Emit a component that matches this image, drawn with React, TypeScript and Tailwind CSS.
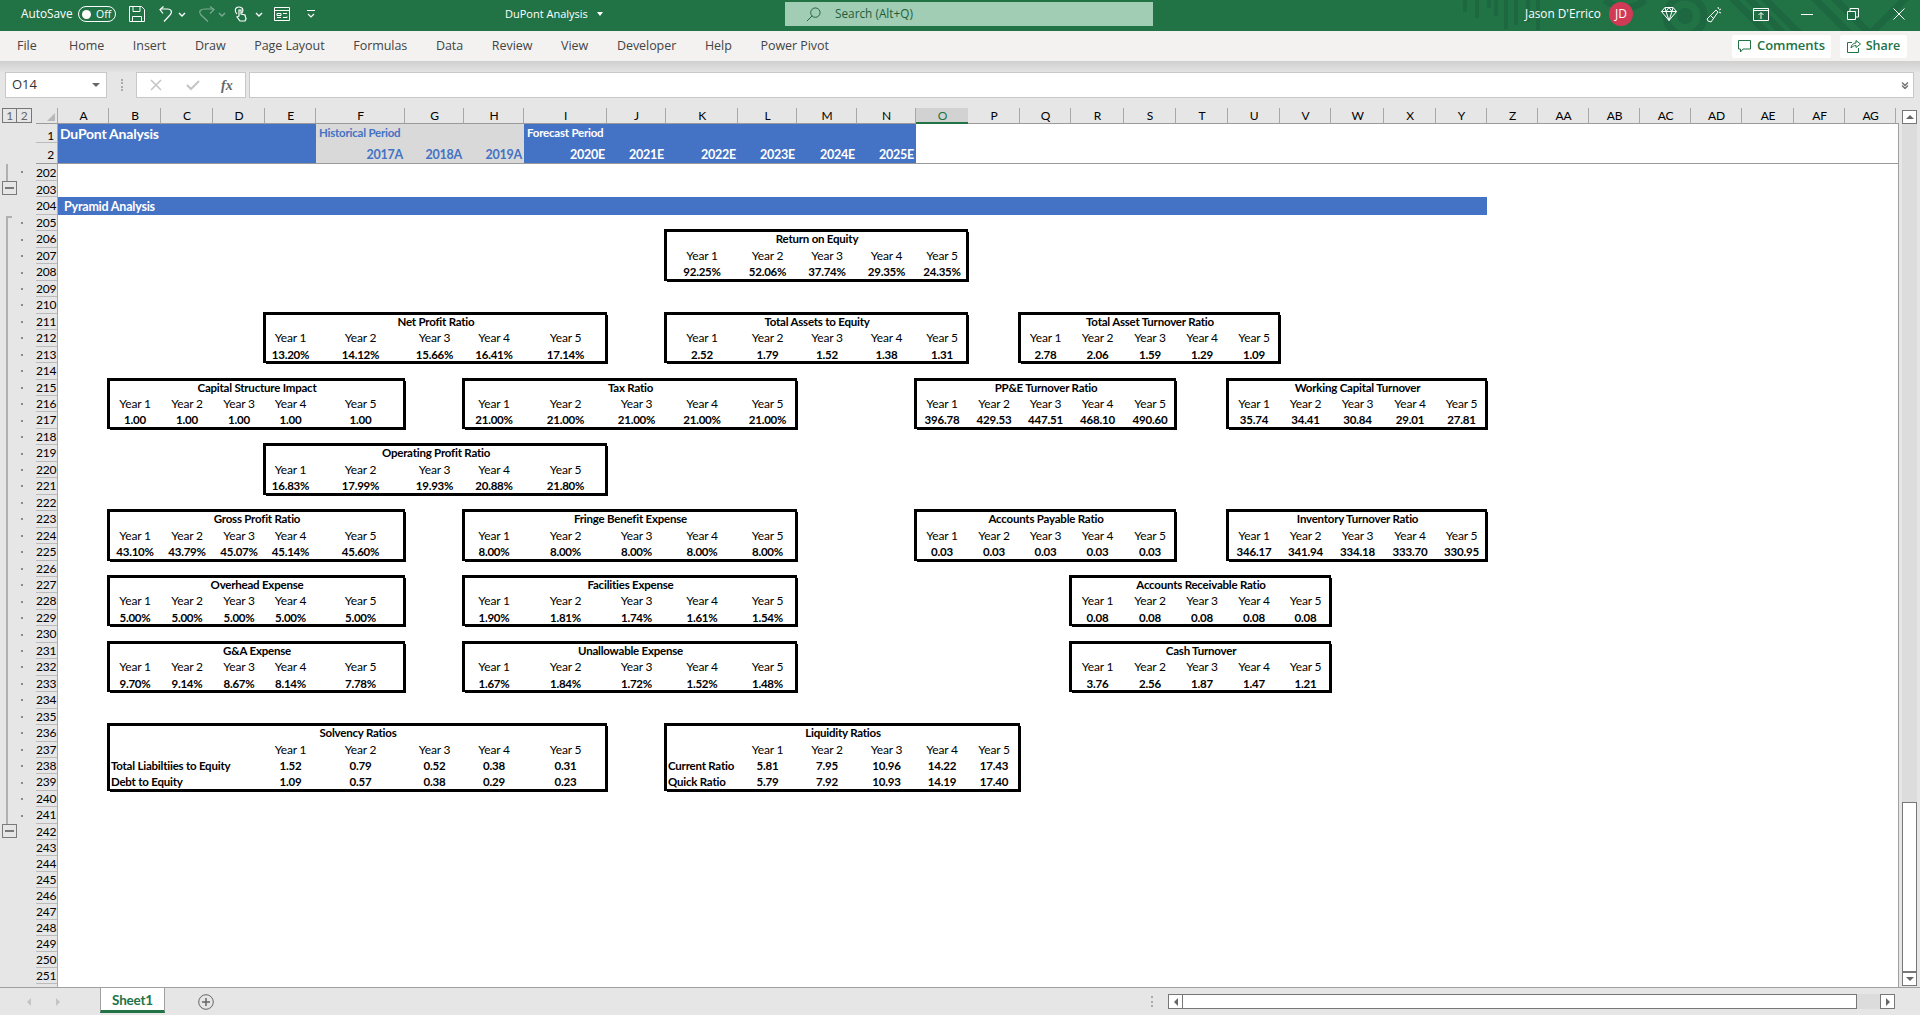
import React from "react";

const LETTERS = ["A","B","C","D","E","F","G","H","I","J","K","L","M","N","O","P","Q","R","S","T","U","V","W","X","Y","Z","AA","AB","AC","AD","AE","AF","AG"];
const TABS = ["Home","Insert","Draw","Page Layout","Formulas","Data","Review","View","Developer","Help","Power Pivot"];
const YEARS = ["Year 1","Year 2","Year 3","Year 4","Year 5"];

type Box = { title: string; place: string; values: string[] };

const BOXES: Box[] = [
  { title: "Return on Equity", place: "col-[13/18] row-[8/11]", values: ["92.25%","52.06%","37.74%","29.35%","24.35%"] },
  { title: "Net Profit Ratio", place: "col-[7/12] row-[13/16]", values: ["13.20%","14.12%","15.66%","16.41%","17.14%"] },
  { title: "Total Assets to Equity", place: "col-[13/18] row-[13/16]", values: ["2.52","1.79","1.52","1.38","1.31"] },
  { title: "Total Asset Turnover Ratio", place: "col-[19/24] row-[13/16]", values: ["2.78","2.06","1.59","1.29","1.09"] },
  { title: "Capital Structure Impact", place: "col-[4/9] row-[17/20]", values: ["1.00","1.00","1.00","1.00","1.00"] },
  { title: "Tax Ratio", place: "col-[10/15] row-[17/20]", values: ["21.00%","21.00%","21.00%","21.00%","21.00%"] },
  { title: "PP&E Turnover Ratio", place: "col-[17/22] row-[17/20]", values: ["396.78","429.53","447.51","468.10","490.60"] },
  { title: "Working Capital Turnover", place: "col-[23/28] row-[17/20]", values: ["35.74","34.41","30.84","29.01","27.81"] },
  { title: "Operating Profit Ratio", place: "col-[7/12] row-[21/24]", values: ["16.83%","17.99%","19.93%","20.88%","21.80%"] },
  { title: "Gross Profit Ratio", place: "col-[4/9] row-[25/28]", values: ["43.10%","43.79%","45.07%","45.14%","45.60%"] },
  { title: "Fringe Benefit Expense", place: "col-[10/15] row-[25/28]", values: ["8.00%","8.00%","8.00%","8.00%","8.00%"] },
  { title: "Accounts Payable Ratio", place: "col-[17/22] row-[25/28]", values: ["0.03","0.03","0.03","0.03","0.03"] },
  { title: "Inventory Turnover Ratio", place: "col-[23/28] row-[25/28]", values: ["346.17","341.94","334.18","333.70","330.95"] },
  { title: "Overhead Expense", place: "col-[4/9] row-[29/32]", values: ["5.00%","5.00%","5.00%","5.00%","5.00%"] },
  { title: "Facilities Expense", place: "col-[10/15] row-[29/32]", values: ["1.90%","1.81%","1.74%","1.61%","1.54%"] },
  { title: "Accounts Receivable Ratio", place: "col-[20/25] row-[29/32]", values: ["0.08","0.08","0.08","0.08","0.08"] },
  { title: "G&A Expense", place: "col-[4/9] row-[33/36]", values: ["9.70%","9.14%","8.67%","8.14%","7.78%"] },
  { title: "Unallowable Expense", place: "col-[10/15] row-[33/36]", values: ["1.67%","1.84%","1.72%","1.52%","1.48%"] },
  { title: "Cash Turnover", place: "col-[20/25] row-[33/36]", values: ["3.76","2.56","1.87","1.47","1.21"] },
];

const SOLVENCY = [
  { label: "Total Liabiltiies to Equity", values: ["1.52","0.79","0.52","0.38","0.31"] },
  { label: "Debt to Equity", values: ["1.09","0.57","0.38","0.29","0.23"] },
];
const LIQUIDITY = [
  { label: "Current Ratio", values: ["5.81","7.95","10.96","14.22","17.43"] },
  { label: "Quick Ratio", values: ["5.79","7.92","10.93","14.19","17.40"] },
];

// the thick cell border straddles the cell edges, about 3px wide and a bit up and left
const boxFrame = "grid grid-cols-subgrid grid-rows-subgrid shadow-[0_-2px_0_#000,-2px_0_0_#000,-2px_-2px_0_#000,1px_1px_0_#000,inset_-2px_-2px_0_#000,inset_1px_1px_0_#000]";
const cell = "text-center whitespace-nowrap leading-[16.5px]";
const yearCell = "text-center whitespace-nowrap leading-[16.5px] text-[12px] tracking-[-0.2px]";

const RatioBox = ({ title, place, values }: Box) => (
  <div className={`${place} ${boxFrame}`}>
    <div className={`col-span-full font-bold ${cell}`}>{title}</div>
    {YEARS.map((y) => <div key={y} className={yearCell}>{y}</div>)}
    {values.map((v, i) => <div key={i} className={`font-bold ${cell}`}>{v}</div>)}
  </div>
);

const Chevron = ({ cls }: { cls: string }) => (
  <svg viewBox="0 0 8 5" className={`w-2 h-[5px] ${cls}`} fill="none" stroke="currentColor" strokeWidth="1.4"><path d="M1 1l3 3 3-3" /></svg>
);

const TitleBar = () => (
  <div className="relative h-[31px] shrink-0 bg-[#217346] text-white flex items-center pb-[3px] font-['Open_Sans',sans-serif] text-[11.8px] whitespace-nowrap overflow-hidden">
    {/* background artwork of the title bar */}
    <svg viewBox="0 0 480 31" className="absolute right-0 top-0 w-[480px] h-[31px]" fill="none" stroke="#1d6840">
      <path d="M25 0v12M37 0v18M49 0v8M56 0v16M66 0v29M76 0v25M88 0v22M98 0v30" strokeWidth="4" />
      <path d="M165 0a30 30 0 0 0 40 0" strokeWidth="7" />
      <circle cx="245" cy="16" r="8" fill="#1d6840" stroke="none" />
      <circle cx="245" cy="16" r="19" strokeWidth="7" />
      <path d="M290 -4l38 38M306 -4l38 38M322 -4l38 38M372 -4l38 38M392 -4l38 38M430 34l40 -40" strokeWidth="7" />
    </svg>

    <span className="ml-[21px] w-[57px]">AutoSave</span>
    <div className="w-[38px] h-4 rounded-full border border-white flex items-center pl-[3px] gap-[5px]">
      <span className="w-[9px] h-[9px] rounded-full bg-white" />
      <span className="text-[10.5px] leading-none">Off</span>
    </div>

    <svg viewBox="0 0 16 16" className="ml-[13px] w-4 h-4" fill="none" stroke="white"><path d="M.5.5h12l3 3v12H.5zM4 .5v5h7v-5M3.5 15.5v-5h9v5" /></svg>
    <svg viewBox="0 0 14 16" className="ml-[14px] w-[14px] h-4" fill="none" stroke="white" strokeWidth="1.2"><path d="M5 15.5l6-6.5c3-3.5 1-6-2.5-6H1M4.5 .5L1 3.5l3 4" /></svg>
    <Chevron cls="ml-[5px] text-white" />
    <svg viewBox="0 0 16 16" className="ml-[13px] w-4 h-4 opacity-40" fill="none" stroke="white" strokeWidth="1.2"><path d="M9 15.5L2 9C-1 5 2 3 6 3h9M11 .5l4 3-4 4" /></svg>
    <Chevron cls="ml-[3px] text-white opacity-40" />
    <svg viewBox="0 0 14 16" className="ml-2 w-[14px] h-4" fill="none" stroke="white" strokeWidth="1.2"><path d="M3 8C.5 6 .5 1 5 1s4.500 4 3 6M5 6v-2h2v4l4 1 1 4-1 2H6L3 11l2-1z" /></svg>
    <Chevron cls="ml-[7px] text-white" />
    <svg viewBox="0 0 16 14" className="ml-[11px] w-4 h-[14px]" fill="none" stroke="white"><path d="M.5.5h15v13H.5zM.5 3.500h15M3 6.500h4v2H3zM9 6.500h4M9 10.500h4v-1M3 10.500h4" /></svg>
    <svg viewBox="0 0 8 8" className="ml-[17px] w-2 h-2" fill="none" stroke="white" strokeWidth="1.2"><path d="M0 .5h8M1 4l3 3 3-3" /></svg>

    <span className="ml-[190px] w-[86px] text-[11px]">DuPont Analysis</span>
    <span className="ml-[6px] w-0 h-0 border-x-[3.500px] border-x-transparent border-t-[4px] border-t-white" />

    <div className="ml-[182px] w-[368px] h-6 bg-[#a0cdb4] text-[#1e5d3b] flex items-center pl-[21px]">
      <svg viewBox="0 0 16 16" className="w-[15px] h-[15px]" fill="none" stroke="currentColor"><circle cx="10" cy="6" r="5" /><path d="M6.500 9.500L1 15" /></svg>
      <span className="ml-[14px]">Search (Alt+Q)</span>
    </div>

    <span className="relative ml-[372px] w-[84px]">Jason D'Errico</span>
    <span className="relative w-6 h-6 rounded-full bg-[#d13a54] flex items-center justify-center text-[12px]">JD</span>
    <svg viewBox="0 0 16 14" className="relative ml-[28px] w-4 h-[14px]" fill="none" stroke="white"><path d="M4 .5h8l3.500 4L8 13.500.5 4.500zM.5 4.500h15M5 4.500L8 13.500l3-9M4 .5l1 4 3-4 3 4 1-4" /></svg>
    <svg viewBox="0 0 16 17" className="relative ml-[29px] w-4 h-[17px]" fill="none" stroke="white"><path d="M10 4l2 2-7 10-3-1-1-2zM4 9l4 4M12 1l.5 2M15 3l-2 1M15 7l-2-1" /></svg>
    <svg viewBox="0 0 16 13" className="relative ml-[31px] w-4 h-[13px]" fill="none" stroke="white"><path d="M.5.5h15v12H.5zM.5 2.500h15M8 11V5M5.500 7L8 4.500 10.500 7" /></svg>
    <svg viewBox="0 0 12 1" className="relative ml-[32px] w-3 h-px" fill="white"><path d="M0 0h12v1H0z" /></svg>
    <svg viewBox="0 0 12 12" className="relative ml-[34px] w-3 h-3" fill="none" stroke="white"><path d="M.5 3.500h8v8h-8zM3 3.500V.5h8.500V9H8.500" /></svg>
    <svg viewBox="0 0 12 12" className="relative ml-[34px] w-3 h-3" fill="none" stroke="white"><path d="M.5.5l11 11M11.500.5l-11 11" /></svg>
  </div>
);

const Ribbon = () => (
  <div className="h-[30px] shrink-0 bg-[#f3f2f1] flex items-center font-['Open_Sans',sans-serif] text-[12.5px] text-[#444]">
    <span className="ml-[17px] w-[52px]">File</span>
    <div className="flex gap-[28.7px] tracking-[-0.05px]">
      {TABS.map((t) => <span key={t}>{t}</span>)}
    </div>
    <div className="ml-auto mr-[13px] flex gap-[9px] font-semibold text-[#217346]">
      <button className="w-[99px] h-[23px] bg-white rounded-[2px] flex items-center justify-center gap-[6px] text-[13px]">
        <svg viewBox="0 0 13 13" className="w-[13px] h-[13px]" fill="none" stroke="currentColor"><path d="M.5.5h12v8.500H5L2.500 12V9H.5z" /></svg>
        Comments
      </button>
      <button className="w-[67px] h-[23px] bg-white rounded-[2px] flex items-center justify-center gap-[5px] text-[12.5px]">
        <svg viewBox="0 0 14 14" className="w-[14px] h-[14px]" fill="none" stroke="currentColor"><path d="M5 3.500H.5v10h11V9M4 9c0-3 2.500-5 5-5V1.500L13.500 5 9 8.500V6.500C7 6.500 5.500 7.500 4 9z" /></svg>
        Share
      </button>
    </div>
  </div>
);

const FormulaBar = () => (
  <div className="shrink-0 font-['Open_Sans',sans-serif]">
    <div className="h-[11px] bg-gradient-to-b from-[#cfcfcf] to-[#e3e3e3]" />
    <div className="h-[26px] flex items-stretch">
      <div className="ml-[5px] w-[102px] bg-white border border-[#c8c8c8] flex items-center pl-[6px] pr-[6px] text-[13px] text-[#333]">
        O14
        <span className="ml-auto w-0 h-0 border-x-[4px] border-x-transparent border-t-[4px] border-t-[#666]" />
      </div>
      <div className="ml-[14px] w-[2px] self-center h-3 border-l-2 border-dotted border-[#aaa]" />
      <div className="ml-[13px] w-[110px] bg-white border border-[#c8c8c8] flex items-center pl-[13px] text-[#c4c4c4]">
        <svg viewBox="0 0 12 12" className="w-3 h-3" fill="none" stroke="currentColor" strokeWidth="1.500"><path d="M1 1l10 10M11 1L1 11" /></svg>
        <svg viewBox="0 0 14 12" className="ml-[24px] w-[14px] h-3" fill="none" stroke="currentColor" strokeWidth="2"><path d="M1 6l4 4 8-8" /></svg>
        <span className="ml-[21px] font-['Liberation_Serif',serif] italic font-bold text-[14px] text-[#666]">fx</span>
      </div>
      <div className="ml-[3px] w-[1665px] bg-white border border-[#c8c8c8] flex items-center justify-end pr-[4px] text-[#777]">
        <svg viewBox="0 0 8 7" className="w-2 h-[7px]" fill="none" stroke="currentColor" strokeWidth="1.500"><path d="M1 .5l3 3 3-3M1 3.500l3 3 3-3" /></svg>
      </div>
    </div>
    <div className="h-[10px]" />
  </div>
);

const MinusBox = ({ place }: { place: string }) => (
  <div className={`${place} col-start-1 ml-[2px] w-[15px] h-[14px] border border-[#7a7a7a] flex items-center justify-center`}>
    <span className="w-[9px] h-[2px] bg-[#7a7a7a]" />
  </div>
);

const Sheet = () => {
  const rows = Array.from({ length: 50 }, (_, i) => 202 + i);
  return (
    <div className="flex-1 grid grid-cols-[36px_22px_51px_52px_52px_52px_51px_89px_59px_60px_83px_59px_72px_59px_60px_59px_52px_52px_51px_53px_52px_52px_52px_51px_53px_52px_51px_51px_51px_51px_51px_51px_52px_51px_51px_3px] grid-rows-[16px_19px_21px_16.5px_16.5px_18px_repeat(37,16.46px)_repeat(10,16px)_1fr] font-['Lato',sans-serif] text-[11.5px] tracking-[-0.22px] text-black">
      {/* white cell area */}
      <div className="col-[3/-1] row-[2/-1] bg-white border-r border-[#a0a0a0]" />
      <div className="col-[3/-1] row-[3/4] border-b border-[#9a9a9a]" />

      {/* outline level buttons */}
      <div className="col-start-1 row-start-1 ml-[2px] flex h-[15px] text-[#666] text-[12px] leading-[13px] text-center">
        <span className="w-[15px] border border-[#777]">1</span>
        <span className="w-[15px] border border-l-0 border-[#777]">2</span>
      </div>
      <div className="col-start-2 row-start-1 border-b border-[#9a9a9a] border-r border-r-[#a8a8a8] flex items-end justify-end pb-[2px] pr-[2px]">
        <span className="w-0 h-0 border-l-[8px] border-l-transparent border-b-[8px] border-b-[#b8b8b8]" />
      </div>

      {/* column headings */}
      {LETTERS.map((l) => (
        <div
          key={l}
          className={
            l === "O"
              ? "row-start-1 bg-[#d2d2d2] text-[#217346] text-center text-[12px] pl-px leading-[15px] border-b-2 border-[#217346]"
              : "row-start-1 text-center text-[12px] pl-px leading-[15px] border-r border-r-[#a8a8a8] border-b border-b-[#9a9a9a]"
          }
        >
          {l}
        </div>
      ))}
      <div className="row-start-1 border-b border-[#9a9a9a]" />

      {/* row headings */}
      <div className="col-start-2 row-start-2 text-right pr-[3px] text-[12px] leading-[24px] border-r border-[#a8a8a8] border-b border-b-[#bbb]">1</div>
      <div className="col-start-2 row-start-3 text-right pr-[3px] text-[12px] leading-[23px] border-r border-[#a8a8a8] border-b border-b-[#9a9a9a]">2</div>
      {rows.map((r, i) => (
        <div
          key={r}
          className={`col-start-2 text-right pr-[3px] text-[12px] border-r border-[#a8a8a8] border-b border-b-[#bbb] ${r < 205 ? "leading-[18px]" : r < 242 ? "leading-[16px]" : "leading-[15px]"}`}
          style={{ gridRow: i + 4 }}
        >
          {r}
        </div>
      ))}
      <div className="col-start-2 row-start-[54] border-r border-[#a8a8a8]" />

      {/* outline column */}
      {rows.filter((r) => r !== 203 && r !== 204 && r < 242).map((r) => (
        <div key={r} className="col-start-1 ml-[21px] self-center w-[2px] h-[2px] bg-[#8a8a8a]" style={{ gridRow: r - 198 }} />
      ))}
      <div className="col-start-1 row-[4/5] ml-[6px] w-[2px] bg-[#b0b0b0]" />
      <MinusBox place="row-[5/6]" />
      <div className="col-start-1 row-[7/44] ml-[6px] mt-[1px] w-[6px] border-l-2 border-t-2 border-[#b0b0b0]" />
      <MinusBox place="row-[44/45]" />

      {/* frozen header rows */}
      <div className="col-[3/8] row-[2/4] bg-[#4472c4] text-white font-bold text-[14px] pl-[2px] leading-[19px] border-b border-[#9a9a9a]">DuPont Analysis</div>
      <div className="col-[8/11] row-[2/3] bg-[#d9d9d9] text-[#4472c4] font-bold text-[11.5px] pl-[3px] pt-[1px] leading-[15px]">Historical Period</div>
      <div className="col-[11/17] row-[2/3] bg-[#4472c4] text-white font-bold text-[11.5px] pl-[3px] pt-[1px] leading-[15px]">Forecast Period</div>
      <div className="col-[8/11] row-[3/4] grid grid-cols-subgrid bg-[#d9d9d9] text-[#4472c4] border-b border-[#9a9a9a]">
        {["2017A","2018A","2019A"].map((y) => (
          <div key={y} className="font-bold text-[12.5px] text-right pr-[2px] leading-[23px]">{y}</div>
        ))}
      </div>
      <div className="col-[11/17] row-[3/4] grid grid-cols-subgrid bg-[#4472c4] text-white border-b border-[#9a9a9a]">
        {["2020E","2021E","2022E","2023E","2024E","2025E"].map((y) => (
          <div key={y} className="font-bold text-[12.5px] text-right pr-[2px] leading-[23px]">{y}</div>
        ))}
      </div>

      {/* section band */}
      <div className="col-[3/28] row-[6/7] bg-[#4472c4] text-white font-bold text-[12.5px] pl-[6px] leading-[19px]">Pyramid Analysis</div>

      {BOXES.map((b) => <RatioBox key={b.title} {...b} />)}

      <div className={`col-[4/12] row-[38/42] ${boxFrame}`}>
        <div className={`col-span-full font-bold ${cell}`}>Solvency Ratios</div>
        <div className="col-span-3" />
        {YEARS.map((y) => <div key={y} className={yearCell}>{y}</div>)}
        {SOLVENCY.map((row) => (
          <React.Fragment key={row.label}>
            <div className="col-span-3 font-bold whitespace-nowrap leading-[16.5px] pl-[2px]">{row.label}</div>
            {row.values.map((v, i) => <div key={i} className={`font-bold ${cell}`}>{v}</div>)}
          </React.Fragment>
        ))}
      </div>

      <div className={`col-[13/19] row-[38/42] ${boxFrame}`}>
        <div className={`col-span-full font-bold ${cell}`}>Liquidity Ratios</div>
        <div />
        {YEARS.map((y) => <div key={y} className={yearCell}>{y}</div>)}
        {LIQUIDITY.map((row) => (
          <React.Fragment key={row.label}>
            <div className="font-bold whitespace-nowrap leading-[16.5px] pl-[2px]">{row.label}</div>
            {row.values.map((v, i) => <div key={i} className={`font-bold ${cell}`}>{v}</div>)}
          </React.Fragment>
        ))}
      </div>
    </div>
  );
};

const VScroll = () => (
  <div className="w-[21px] pt-[2px] pb-px pl-[3px] pr-[3px] flex flex-col">
    <div className="h-[14px] bg-white border border-[#777] flex items-center justify-center">
      <span className="w-0 h-0 border-x-[4px] border-x-transparent border-b-[4px] border-b-[#666]" />
    </div>
    <div className="flex-1 bg-[#dcdcdc]" />
    <div className="h-[170px] bg-white border border-[#777]" />
    <div className="h-[14px] bg-white border border-[#777] flex items-center justify-center">
      <span className="w-0 h-0 border-x-[4px] border-x-transparent border-t-[4px] border-t-[#666]" />
    </div>
  </div>
);

const BottomBar = () => (
  <div className="h-[28px] shrink-0 border-t border-[#a0a0a0] flex items-start font-['Lato',sans-serif]">
    <div className="w-[100px] h-full flex items-center text-[#c4c4c4]">
      <span className="ml-[27px] w-0 h-0 border-y-[4px] border-y-transparent border-r-[4px] border-r-current" />
      <span className="ml-[25px] w-0 h-0 border-y-[4px] border-y-transparent border-l-[4px] border-l-current" />
    </div>
    <div className="w-[65px] h-[25px] bg-white border-x border-[#a0a0a0] border-b-[3px] border-b-[#217346] text-[#217346] font-bold text-[13.5px] text-center leading-[25px] tracking-[-0.2px]">Sheet1</div>
    <svg viewBox="0 0 16 16" className="ml-[33px] mt-[6px] w-4 h-4" fill="none" stroke="#666"><circle cx="8" cy="8" r="7.300" /><path d="M8 4v8M4 8h8" strokeWidth="1.500" /></svg>
    <div className="ml-[937px] mt-[8px] h-[11px] border-l-2 border-dotted border-[#aaa]" />
    <div className="ml-[15px] mt-[6px] w-[727px] h-[15px] flex">
      <div className="w-[15px] border border-[#777] bg-white flex items-center justify-center">
        <span className="w-0 h-0 border-y-[4px] border-y-transparent border-r-[4px] border-r-[#666]" />
      </div>
      <div className="w-[674px] border-y border-r border-[#777] bg-white" />
      <div className="flex-1 bg-[#dcdcdc]" />
      <div className="w-[15px] border border-[#777] bg-white flex items-center justify-center">
        <span className="w-0 h-0 border-y-[4px] border-y-transparent border-l-[4px] border-l-[#666]" />
      </div>
    </div>
  </div>
);

export default function App() {
  return (
    <div className="w-[1920px] h-[1015px] flex flex-col overflow-hidden bg-[#e6e6e6]">
      <TitleBar />
      <Ribbon />
      <FormulaBar />
      <div className="flex-1 flex min-h-0">
        <Sheet />
        <VScroll />
      </div>
      <BottomBar />
    </div>
  );
}
